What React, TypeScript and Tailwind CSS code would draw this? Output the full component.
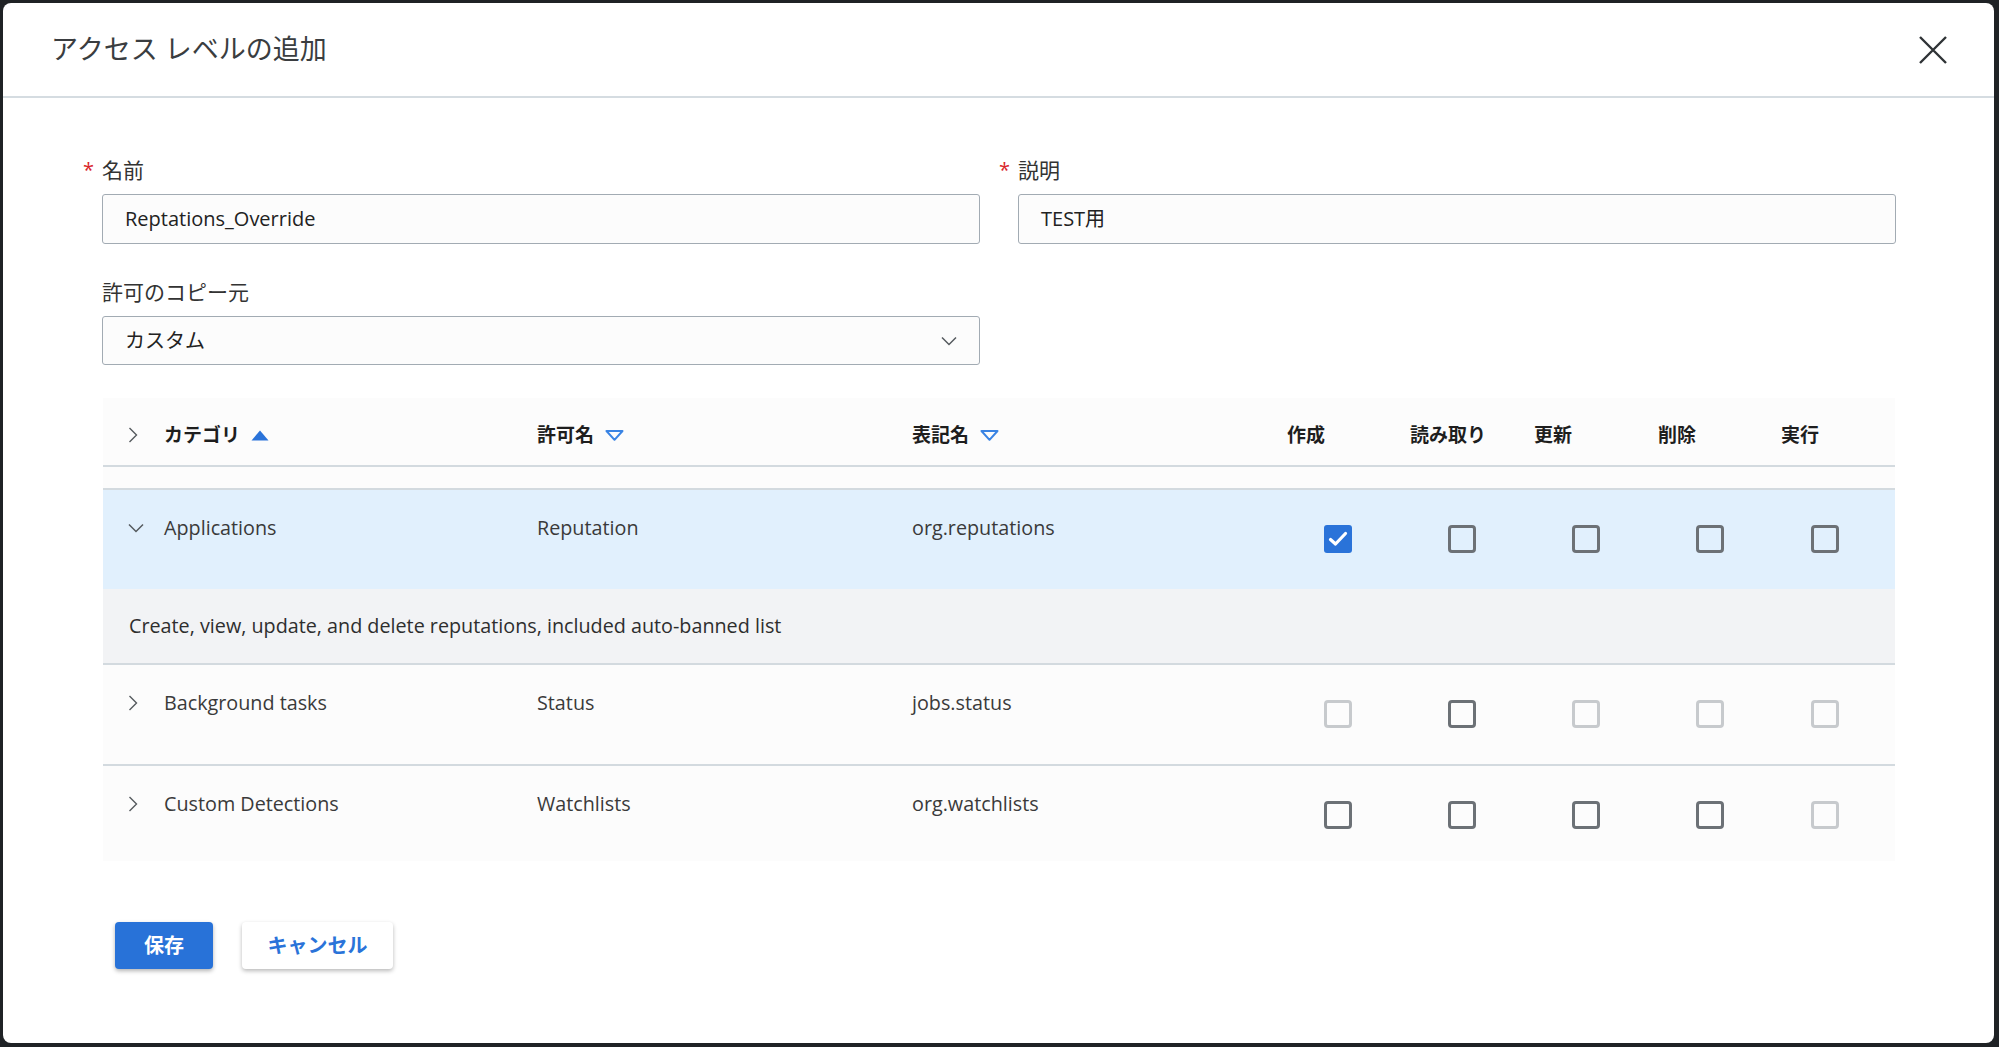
import React from "react";

const FONT = "font-['Open_Sans','Noto_Sans_CJK_JP',sans-serif]";
const COLS = "grid grid-cols-[61px_373px_375px_359px_124px_124px_124px_124px_128px]";

type CB = "checked" | "on" | "off";

function Checkbox({ v }: { v: CB }) {
  if (v === "checked") {
    return (
      <div className="w-[28px] h-[28px] rounded-[3px] bg-[#2a73d9] flex items-center justify-center">
        <svg width="20" height="16" viewBox="0 0 20 16">
          <path d="M2.5 8.5 L7.5 13 L17.5 2.5" fill="none" stroke="#ffffff" strokeWidth="3.2" strokeLinecap="round" strokeLinejoin="round" />
        </svg>
      </div>
    );
  }
  if (v === "on") {
    return <div className="w-[28px] h-[28px] rounded-[4px] border-[3px] border-[#6c7176]" />;
  }
  return <div className="w-[28px] h-[28px] rounded-[4px] border-[3px] border-[#c7cacd]" />;
}

function ChevronRight() {
  return (
    <svg width="10" height="16" viewBox="0 0 10 16">
      <path d="M1.5 1 L8.5 8 L1.5 15" fill="none" stroke="#555a5e" strokeWidth="1.4" />
    </svg>
  );
}

function ChevronDown({ w = 16 }: { w?: number }) {
  return (
    <svg width={w} height="10" viewBox="0 0 16 10">
      <path d="M1 1.5 L8 8.5 L15 1.5" fill="none" stroke="#555a5e" strokeWidth="1.5" />
    </svg>
  );
}

function SortUp() {
  return (
    <svg width="18" height="11" viewBox="0 0 18 11">
      <polygon points="9,0.5 17.5,10.5 0.5,10.5" fill="#2a73d9" />
    </svg>
  );
}

function SortDown() {
  return (
    <svg width="19" height="11" viewBox="0 0 19 11">
      <polygon points="1.5,1 17.5,1 9.5,9.8" fill="none" stroke="#3a84e4" strokeWidth="2" strokeLinejoin="round" />
    </svg>
  );
}

type Row = {
  cat: string;
  perm: string;
  disp: string;
  boxes: CB[];
  open?: boolean;
};

function DataRow({ r, className }: { r: Row; className: string }) {
  return (
    <div className={`${COLS} ${className}`}>
      <div className="pl-[25px] pt-[25px] h-[26px] box-content flex items-center">
        {r.open ? <ChevronDown /> : <ChevronRight />}
      </div>
      <div className="pt-[25px] leading-[26px]">{r.cat}</div>
      <div className="pt-[25px] leading-[26px]">{r.perm}</div>
      <div className="pt-[25px] leading-[26px]">{r.disp}</div>
      {r.boxes.map((b, i) => (
        <div key={i} className={`pt-[35px] ${i === 4 ? "pl-[44px]" : "pl-[53px]"}`}>
          <Checkbox v={b} />
        </div>
      ))}
    </div>
  );
}

function RequiredLabel({ text }: { text: string }) {
  return (
    <div className="h-[28px] leading-[28px] text-[21px] text-[#333] flex">
      <span className="-ml-[19px] w-[19px] text-[#d9252a] text-[20px]">*</span>
      <span>{text}</span>
    </div>
  );
}

export default function App() {
  const rows: Row[] = [
    { cat: "Applications", perm: "Reputation", disp: "org.reputations", boxes: ["checked", "on", "on", "on", "on"], open: true },
    { cat: "Background tasks", perm: "Status", disp: "jobs.status", boxes: ["off", "on", "off", "off", "off"] },
    { cat: "Custom Detections", perm: "Watchlists", disp: "org.watchlists", boxes: ["on", "on", "on", "on", "off"] },
  ];

  return (
    <div className={`w-[1999px] h-[1047px] bg-[#1f2225] pt-[3px] pl-[3px] pr-[5px] pb-[4px] ${FONT}`}>
      <div className="w-full h-full bg-white rounded-[8px] flex flex-col overflow-hidden">
        {/* Header */}
        <div className="h-[95px] shrink-0 border-b-2 border-[#d5dce1] flex items-center justify-between pl-[48px] pr-[46px]">
          <div className="text-[27px] text-[#3a3d40]">アクセス レベルの追加</div>
          <svg width="30" height="30" viewBox="0 0 30 30">
            <path d="M2 2 L28 28 M28 2 L2 28" stroke="#2f3336" strokeWidth="2.4" />
          </svg>
        </div>

        {/* Body */}
        <div className="pl-[99px] pr-[98px] pt-[58px]">
          <div className="grid grid-cols-2 gap-x-[38px]">
            <div>
              <RequiredLabel text="名前" />
              <div className="mt-[10px] h-[50px] rounded-[3px] border-[1.5px] border-[#a2abb3] bg-[#fcfcfc] flex items-center pl-[22px] text-[20px] text-[#222]">
                Reptations_Override
              </div>
            </div>
            <div>
              <RequiredLabel text="説明" />
              <div className="mt-[10px] h-[50px] rounded-[3px] border-[1.5px] border-[#a2abb3] bg-[#fcfcfc] flex items-center pl-[22px] text-[20px] text-[#222]">
                TEST用
              </div>
            </div>
            <div className="mt-[34px]">
              <div className="h-[28px] leading-[28px] text-[21px] text-[#333]">許可のコピー元</div>
              <div className="mt-[10px] h-[49px] rounded-[3px] border-[1.5px] border-[#a2abb3] bg-[#fcfcfc] flex items-center justify-between pl-[22px] pr-[22px] text-[20px] text-[#222]">
                <span>カスタム</span>
                <ChevronDown />
              </div>
            </div>
          </div>

          {/* Table */}
          <div className="mt-[33px] mx-[1px] text-[19.75px] text-[#3a3a3a]">
            <div className={`${COLS} h-[69px] pt-[7px] bg-[#fcfcfc] border-b-2 border-[#d3dadf] items-center font-bold text-[19px] text-[#1e1e1e]`}>
              <div className="pl-[25px] flex items-center"><ChevronRight /></div>
              <div className="flex items-center gap-[11px]"><span>カテゴリ</span><SortUp /></div>
              <div className="flex items-center gap-[11px]"><span>許可名</span><SortDown /></div>
              <div className="flex items-center gap-[11px]"><span>表記名</span><SortDown /></div>
              <div className="pl-[16px]">作成</div>
              <div className="pl-[15px]">読み取り</div>
              <div className="pl-[15px]">更新</div>
              <div className="pl-[15px]">削除</div>
              <div className="pl-[14px]">実行</div>
            </div>
            <div className="h-[23px] bg-[#fcfcfc] border-b-2 border-[#d3dadf]" />
            <DataRow r={rows[0]} className="h-[99px] bg-[#e1f0fd]" />
            <div className="h-[76px] bg-[#f2f3f5] border-b-2 border-[#d3dadf] flex items-center pl-[26px] text-[#2e2e2e]">
              Create, view, update, and delete reputations, included auto-banned list
            </div>
            <DataRow r={rows[1]} className="h-[101px] bg-[#fcfcfc] border-b-2 border-[#d3dadf]" />
            <DataRow r={rows[2]} className="h-[95px] bg-[#fcfcfc]" />
          </div>

          {/* Buttons */}
          <div className="mt-[61px] pl-[13px] flex gap-[29px]">
            <div className="w-[98px] h-[47px] rounded-[4px] bg-[#2872d8] text-white font-bold text-[20px] flex items-center justify-center shadow-[0_2px_4px_rgba(0,0,0,0.3)]">
              保存
            </div>
            <div className="w-[151px] h-[47px] rounded-[4px] bg-white text-[#2a73d9] font-bold text-[20px] flex items-center justify-center shadow-[0_2px_4px_rgba(0,0,0,0.28)]">
              キャンセル
            </div>
          </div>
        </div>
      </div>
    </div>
  );
}
